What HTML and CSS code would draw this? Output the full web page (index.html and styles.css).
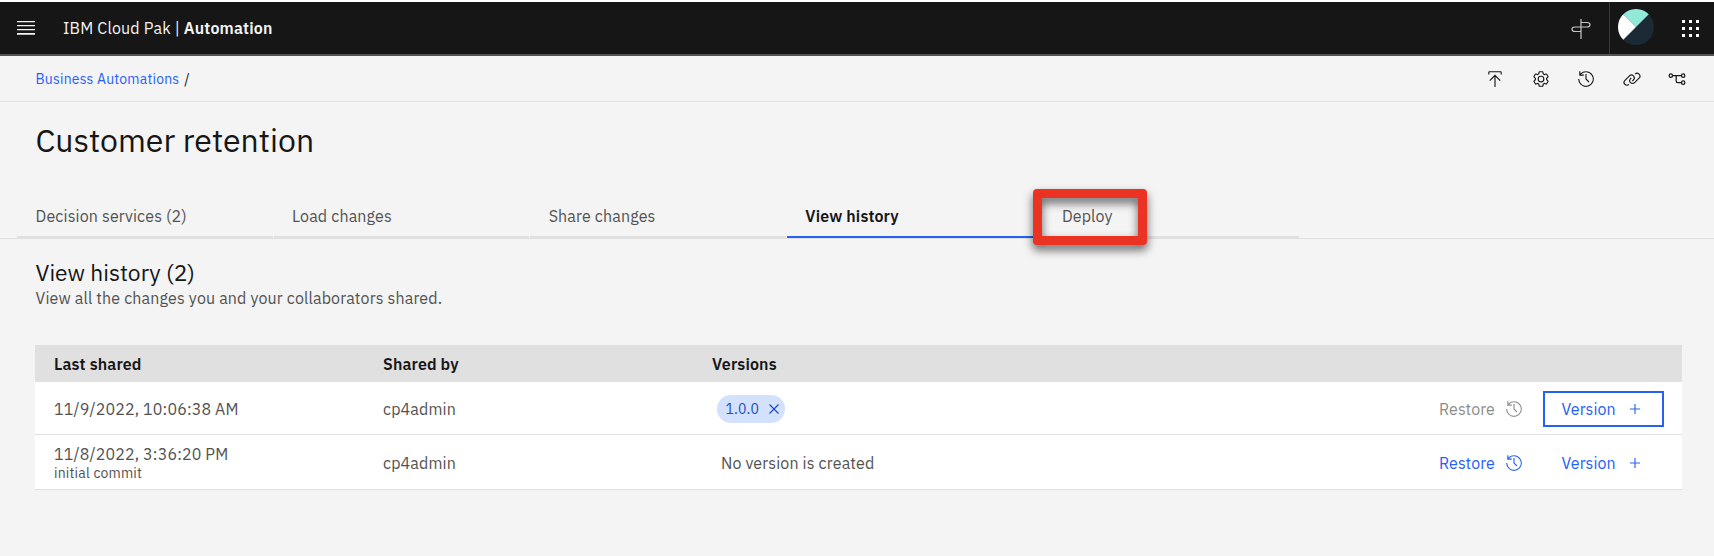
FILE: index.html
```
<!DOCTYPE html>
<html lang="en">
<head>
<meta charset="utf-8">
<title>Customer retention</title>
<link rel="stylesheet" href="styles.css">
</head>
<body>
<svg class="defs" aria-hidden="true">
  <symbol id="history" viewBox="0 0 32 32"><path d="M20.59 22 15 16.41V7h2v8.58l5 5.01L20.59 22z"/><path d="M16 2A13.94 13.94 0 0 0 6 6.23V2H4v8h8V8H7.08A12 12 0 1 1 4 16H2A14 14 0 1 0 16 2Z"/></symbol>
  <symbol id="add" viewBox="0 0 32 32"><path d="M17 15V7h-2v8H7v2h8v8h2v-8h8v-2z"/></symbol>
</svg>
<header class="topbar">
  <svg class="menu" viewBox="0 0 18 14"><path d="M0 0h18v1.3H0zM0 4h18v1.3H0zM0 8h18v1.3H0zM0 12h18v1.8H0z"/></svg>
  <div class="brand">IBM Cloud Pak | <b>Automation</b></div>
  <svg class="signpost" viewBox="0 0 20 20" fill="none"><path d="M10 0v20M10 3.5h6q3 0 3 2.2t-3 2.3h-6M10 8H4q-3 0-3 2.2t3 2.3h6"/></svg>
  <div class="profile">
    <svg class="avatar" viewBox="0 0 36 36"><circle cx="18" cy="18" r="18" fill="#1c2a35"/><path d="M5.27 5.27A18 18 0 0 1 30.73 5.27L18 18z" fill="#92e9d8"/><path d="M5.27 5.27A18 18 0 0 0 5.27 30.73L18 18z" fill="#fff"/></svg>
  </div>
  <svg class="switcher" viewBox="0 0 17 17"><path d="M0 0h3v3H0zM7 0h3v3H7zM14 0h3v3h-3zM0 7h3v3H0zM7 7h3v3H7zM14 7h3v3h-3zM0 14h3v3H0zM7 14h3v3H7zM14 14h3v3h-3z"/></svg>
</header>
<nav class="crumbs">
  <div><a>Business Automations</a><span class="slash">/</span></div>
  <div class="tools">
    <svg viewBox="0 0 32 32"><path d="M6 18 7.41 19.41 15 11.83V30h2V11.83l7.59 7.58L26 18 16 8zM6 8V4h20v4h2V4a2 2 0 0 0-2-2H6a2 2 0 0 0-2 2v4z"/></svg>
    <svg viewBox="0 0 32 32"><path d="M27 16.76V16v-.77l1.92-1.68A2 2 0 0 0 29.3 11l-2.36-4a2 2 0 0 0-1.73-1 2 2 0 0 0-.64.1l-2.43.82a11.35 11.35 0 0 0-1.31-.75l-.51-2.52a2 2 0 0 0-2-1.61h-4.68a2 2 0 0 0-2 1.61l-.51 2.52a11.48 11.48 0 0 0-1.32.75l-2.38-.86A2 2 0 0 0 6.79 6a2 2 0 0 0-1.73 1L2.7 11a2 2 0 0 0 .41 2.51L5 15.24v1.53l-1.89 1.68A2 2 0 0 0 2.7 21l2.36 4a2 2 0 0 0 1.73 1 2 2 0 0 0 .64-.1l2.43-.82a11.35 11.35 0 0 0 1.31.75l.51 2.52a2 2 0 0 0 2 1.61h4.72a2 2 0 0 0 2-1.61l.51-2.52a11.48 11.48 0 0 0 1.32-.75l2.42.82a2 2 0 0 0 .64.1 2 2 0 0 0 1.73-1l2.28-4a2 2 0 0 0-.41-2.51zM25.21 24l-3.43-1.16a8.86 8.86 0 0 1-2.71 1.57L18.36 28h-4.72l-.71-3.55a9.36 9.36 0 0 1-2.7-1.57L6.79 24l-2.36-4 2.72-2.4a8.9 8.9 0 0 1 0-3.13L4.43 12l2.36-4 3.43 1.16a8.86 8.86 0 0 1 2.71-1.57L13.64 4h4.72l.71 3.55a9.36 9.36 0 0 1 2.7 1.57L25.21 8l2.36 4-2.72 2.4a8.9 8.9 0 0 1 0 3.13L27.57 20z"/><path d="M16 22a6 6 0 1 1 6-6 5.94 5.94 0 0 1-6 6zm0-10a3.91 3.91 0 0 0-4 4 3.91 3.91 0 0 0 4 4 3.91 3.91 0 0 0 4-4 3.91 3.91 0 0 0-4-4z"/></svg>
    <svg><use href="#history"/></svg>
    <svg viewBox="0 0 32 32"><path d="M29.25 6.76a6 6 0 0 0-8.5 0l1.42 1.42a4 4 0 1 1 5.67 5.67l-8 8a4 4 0 1 1-5.67-5.66l1.41-1.42-1.41-1.42-1.42 1.42a6 6 0 0 0 0 8.5A6 6 0 0 0 17 25a6 6 0 0 0 4.27-1.76l8-8a6 6 0 0 0-.02-8.48z"/><path d="M4.19 24.82a4 4 0 0 1 0-5.67l8-8a4 4 0 0 1 5.67 0A3.94 3.94 0 0 1 19 14a4 4 0 0 1-1.17 2.85L15.71 19l1.42 1.42 2.12-2.12a6 6 0 0 0-8.51-8.51l-8 8a6 6 0 0 0 0 8.51A6 6 0 0 0 7 28a6.07 6.07 0 0 0 4.28-1.76l-1.42-1.42a4 4 0 0 1-5.67 0z"/></svg>
    <svg viewBox="0 0 32 32"><g fill="none" stroke="#161616" stroke-width="2.2"><circle cx="5" cy="10" r="3"/><circle cx="27" cy="10" r="3"/><circle cx="27" cy="22.5" r="3"/><path d="M8 10h16M14.5 10v9.500a3 3 0 0 0 3 3H24"/></g></svg>
  </div>
</nav>
<h1>Customer retention</h1>
<div class="tabs">
  <div class="tab">Decision services (2)</div>
  <div class="tab">Load changes</div>
  <div class="tab">Share changes</div>
  <div class="tab active">View history</div>
  <div class="tab">Deploy<span class="callout"></span></div>
</div>
<main>
  <h2>View history (2)</h2>
  <p class="lead">View all the changes you and your collaborators shared.</p>
  <div class="table">
    <div class="row head"><div>Last shared</div><div>Shared by</div><div>Versions</div></div>
    <div class="row first">
      <div class="date">11/9/2022, 10:06:38 AM</div>
      <div>cp4admin</div>
      <div><span class="tag">1.0.0<svg viewBox="0 0 10 10"><path d="M.5.5l9 9M9.5.5l-9 9"/></svg></span></div>
      <div class="actions">
        <span class="btn restore disabled">Restore<svg><use href="#history"/></svg></span>
        <span class="btn version focus">Version<svg><use href="#add"/></svg></span>
      </div>
    </div>
    <div class="row second">
      <div><div class="date">11/8/2022, 3:36:20 PM</div><div class="note">initial commit</div></div>
      <div>cp4admin</div>
      <div class="none">No version is created</div>
      <div class="actions">
        <span class="btn restore">Restore<svg><use href="#history"/></svg></span>
        <span class="btn version">Version<svg><use href="#add"/></svg></span>
      </div>
    </div>
  </div>
</main>
</body>
</html>
```
FILE: styles.css
```
* { box-sizing: border-box; }
body {
  margin: 0;
  padding-top: 2px;
  height: 556px;
  overflow: hidden;
  background: linear-gradient(#fff 2px, #f4f4f4 2px);
  color: #161616;
  font: 16px/20px "IBM Plex Sans", Roboto, sans-serif;
}
.defs { position: absolute; width: 0; height: 0; }
svg { display: block; flex: none; }

.topbar {
  display: flex;
  align-items: center;
  height: 54px;
  padding: 0 15px 0 17px;
  background: #161616;
  border-bottom: 2px solid #525252;
  color: #f4f4f4;
}
.menu { width: 18px; height: 14px; fill: #f4f4f4; margin-right: 28px; }
.brand { flex: 1; white-space: nowrap; padding-bottom: 1px; letter-spacing: 0.17px; }
.brand b { font-weight: 600; }
.signpost { width: 20px; height: 20px; stroke: #c6c6c6; stroke-width: 1.2; margin: 2px 18px 0 0; }
.profile {
  align-self: stretch;
  border-left: 1px solid #393939;
  padding: 7px 28px 0 8px;
}
.avatar { width: 36px; height: 36px; }
.switcher { width: 17px; height: 17px; fill: #fff; }

.crumbs {
  display: flex;
  justify-content: space-between;
  align-items: center;
  height: 46px;
  padding: 0 28px 0 35.5px;
  border-bottom: 1px solid #e0e0e0;
  font-size: 14px;
  letter-spacing: 0.18px;
}
.crumbs a { color: #2760f7; }
.slash { margin-left: 5px; }
.tools { display: flex; gap: 27.5px; }
.tools svg { width: 18px; height: 18px; fill: #161616; }

h1 {
  margin: 18px 0 0 35.5px;
  font-size: 32px;
  line-height: 40px;
  font-weight: 400;
}

.tabs {
  display: flex;
  gap: 1px;
  height: 48px;
  margin: 31px 0 20px;
  padding-left: 17px;
  border-bottom: 1px solid #e0e0e0;
}
.tab {
  position: relative;
  width: 255.6px;
  padding: 15px 0 0 18.5px;
  height: 48px;
  border-bottom: 3px solid #e0e0e0;
  color: #525252;
  letter-spacing: 0.14px;
}
.tab.active {
  border-bottom: 2px solid #2760f7;
  height: 47px;
  color: #161616;
  font-weight: 600;
}
.callout {
  position: absolute;
  left: -10px;
  top: -2px;
  width: 114px;
  height: 56px;
  border: 9px solid #eb3323;
  border-radius: 4px;
  filter: drop-shadow(0 5px 5px rgba(0, 0, 0, 0.6));
}

main { padding: 0 32px 0 35px; }
h2 { margin: 0 0 0 0.5px; font-size: 22.8px; line-height: 28px; font-weight: 400; }
.lead { margin: 1px 0 37px 0.5px; color: #525252; letter-spacing: 0.15px; }

.row {
  display: grid;
  grid-template-columns: 329px 329px 1fr auto;
  align-items: center;
  padding-left: 19px;
  background: #fff;
  border-bottom: 1px solid #e0e0e0;
  color: #525252;
  letter-spacing: 0.14px;
}
.head {
  height: 37px;
  background: #e0e0e0;
  color: #161616;
  font-weight: 600;
  border: 0;
}
.first { height: 53px; padding-top: 2px; }
.second { height: 55px; padding-top: 1px; }
.note { font-size: 14px; line-height: 18px; letter-spacing: 0.18px; }
.none { padding-left: 9px; }
.tag {
  display: inline-flex;
  align-items: center;
  gap: 10px;
  height: 28px;
  width: 68.5px;
  margin-left: 4.5px;
  padding-left: 9px;
  border-radius: 14px;
  background: #d3e1fd;
  color: #2049c4;
  font-size: 14px;
  vertical-align: top;
}
.tag svg { width: 10px; height: 10px; stroke: #2049c4; stroke-width: 1.2; }
.actions { display: flex; align-items: center; padding-right: 18.5px; }
.btn { display: flex; align-items: center; color: #2760f7; letter-spacing: 0.05px; }
.btn svg { width: 18px; height: 18px; fill: currentColor; }
.restore { width: 103.500px; gap: 10px; }
.restore.disabled { color: #8d8d8d; }
.version {
  width: 121px;
  height: 36px;
  padding-left: 17px;
  gap: 10px;
  border: 2px solid transparent;
}
.version.focus { border-color: #2760f7; }
```
